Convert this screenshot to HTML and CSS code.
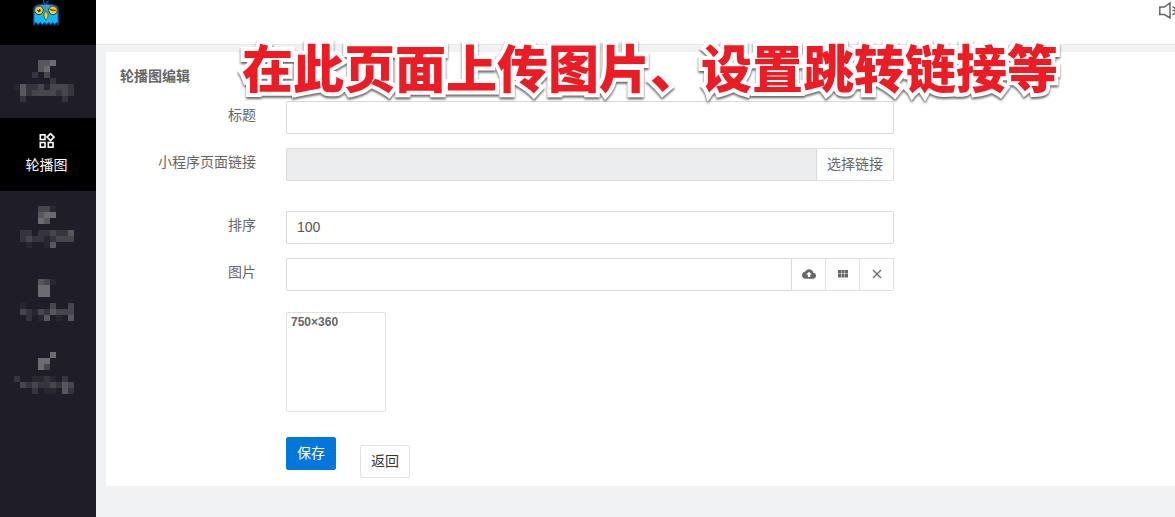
FILE: index.html
```html
<!DOCTYPE html>
<html lang="zh-CN">
<head>
    <meta charset="UTF-8">
    <meta name="viewport" content="width=device-width, initial-scale=1.0">
    <title>轮播图编辑</title>
    <link rel="stylesheet" href="styles.css">
</head>
<body>
    <div class="layout">
        <aside class="sidebar">
            <div class="logo">
                <svg width="28" height="26" viewBox="96 0 84 78">
                    <path d="M138 15c-8-4-8-10-7-17M138 15c-1-5 2-10 8-10" fill="none" stroke="#1558a8" stroke-width="4"/>
                    <path d="M101 74V30c0-12 9-18 37-18s37 6 37 18v44l-5-5-6 6-6-6-6 6-6-6-7 6-6-6-6 6-6-6-6 6-7-6-6 6z" fill="#12b9f5" stroke="#0c3c7c" stroke-width="4"/>
                    <path d="M106 20c14-8 50-8 64 0l-32 16z" fill="#3a9bd8"/>
                    <circle cx="117" cy="31" r="13" fill="#ffc808" stroke="#0c3c7c" stroke-width="3"/>
                    <circle cx="159" cy="31" r="13" fill="#ffc808" stroke="#0c3c7c" stroke-width="3"/>
                    <circle cx="117" cy="31" r="5" fill="#123a6b"/>
                    <circle cx="115" cy="28" r="2" fill="#fff"/>
                    <path d="M150 28c4-1 6 4 9 3s5-1 8 1" fill="none" stroke="#6b4a10" stroke-width="4"/>
                    <path d="M138 34c5 3 7 9 6 14-1 6-4 10-6 13-2-3-5-7-6-13-1-5 1-11 6-14z" fill="#ffc808" stroke="#0c3c7c" stroke-width="2"/>
                </svg>
            </div>
            <nav class="menu">
                <a class="menu-item" href="#" aria-label="菜单一">
                    <svg class="blocks" viewBox="0 0 10 7">
                        <path class="s1" d="M0 4.5h1M5 4.5h1"/>
                        <path class="s2" d="M3 2.5h1M6 3.5h1M2 4.5h2M9 4.5h1M2 5.5h1M7 5.5h1M9 5.5h1M1 6.5h1M8 6.5h1"/>
                        <path class="s3" d="M5 2.5h1M4 4.5h1M6 4.5h3M3 5.5h4M8 5.5h1"/>
                        <path class="s4" d="M4 .5h2M4 1.5h1M1 4.5h1M1 5.5h1"/>
                        <path class="s5" d="M6 .5h1M5 1.5h1"/>
                    </svg>
                </a>
                <a class="menu-item active" href="#">
                    <svg width="16" height="16" viewBox="0 0 16 16" fill="none" stroke="#fff" stroke-width="1.600">
                        <rect x="1.300" y="1.800" width="4.700" height="4.700"/>
                        <path d="M11.500 .6L15 4.100 11.500 7.600 8 4.100z"/>
                        <rect x="1.300" y="9.500" width="4.700" height="4.700"/>
                        <rect x="9.300" y="9.500" width="4.700" height="4.700"/>
                    </svg>
                    <span>轮播图</span>
                </a>
                <a class="menu-item" href="#" aria-label="菜单三">
                    <svg class="blocks" viewBox="0 0 10 7">
                        <path class="s1" d="M6 .5h1M5 5.5h1M2 6.5h1M5 6.5h1"/>
                        <path class="s2" d="M1 4.5h2M4 4.5h2M7 4.5h2M1 5.5h1M3 5.5h2M6 5.5h1"/>
                        <path class="s3" d="M4 .5h2M6 4.5h1M2 5.5h1M7 5.5h3"/>
                        <path class="s4" d="M4 1.5h1M5 2.5h1M9 4.5h1M6 6.5h1"/>
                        <path class="s5" d="M5 1.5h2M4 2.5h1"/>
                    </svg>
                </a>
                <a class="menu-item" href="#" aria-label="菜单四">
                    <svg class="blocks" viewBox="0 0 10 7">
                        <path class="s1" d="M6 .5h1M1 4.5h1M3 5.5h1M4 6.5h1M7 6.5h1"/>
                        <path class="s2" d="M2 5.5h1M5 5.5h1M2 6.5h1"/>
                        <path class="s3" d="M5 .5h1M6 4.5h1M9 4.5h1M1 5.5h1M4 5.5h1M7 5.5h3"/>
                        <path class="s4" d="M4 .5h1M6 5.5h1M5 6.5h1M9 6.5h1"/>
                        <path class="s5" d="M4 1.5h2M4 2.5h2"/>
                    </svg>
                </a>
                <a class="menu-item" href="#" aria-label="菜单五">
                    <svg class="blocks" viewBox="0 0 10 7">
                        <path class="s1" d="M3 4.5h2M6 4.5h1M5 6.5h2"/>
                        <path class="s2" d="M0 4.5h1M5 4.5h1M8 4.5h1M2 5.5h1M4 5.5h2M7 5.5h1M3 6.5h1M9 6.5h1"/>
                        <path class="s3" d="M5 2.5h1M1 5.5h1M3 5.5h1M6 5.5h1M9 5.5h1"/>
                        <path class="s4" d="M8 5.5h1M8 6.5h1"/>
                        <path class="s5" d="M6 .5h1M4 1.5h2M4 2.5h1"/>
                    </svg>
                </a>
            </nav>
        </aside>

        <div class="main">
            <header class="topbar">
                <svg width="16" height="20" viewBox="0 0 16 20" fill="none" stroke="#666" stroke-width="1.500">
                    <path d="M.8 7h4.500L11 3v15l-5.700-3.500H.8zM13.500 6.500l3 2M13.500 10.500h3M13.500 15l3-2.500"/>
                </svg>
            </header>

            <main class="card">
                <h1 class="card-title">轮播图编辑</h1>
                <form class="form">
                    <div class="row">
                        <label for="title">标题</label>
                        <div class="field"><input type="text" id="title"></div>
                    </div>
                    <div class="row row-link">
                        <label for="link">小程序页面链接</label>
                        <div class="field group">
                            <input type="text" id="link" disabled>
                            <button type="button" class="addon">选择链接</button>
                        </div>
                    </div>
                    <div class="row">
                        <label for="sort">排序</label>
                        <div class="field"><input type="text" id="sort" value="100"></div>
                    </div>
                    <div class="row row-image">
                        <label for="image">图片</label>
                        <div class="field">
                            <div class="group">
                                <input type="text" id="image">
                                <button type="button" class="addon icon" aria-label="上传">
                                    <svg width="14" height="14" viewBox="0 0 24 24" fill="#666"><path d="M19.350 10.040C18.670 6.590 15.640 4 12 4 9.110 4 6.600 5.640 5.350 8.040 2.340 8.360 0 10.910 0 14c0 3.310 2.690 6 6 6h13c2.760 0 5-2.240 5-5 0-2.640-2.050-4.780-4.650-4.960zM14 13v4h-4v-4H7l5-5 5 5h-3z"/></svg>
                                </button>
                                <button type="button" class="addon icon" aria-label="图库">
                                    <svg width="14" height="14" viewBox="0 0 14 14" fill="#666"><path d="M2 3h3v3.500H2zM5.500 3h3v3.500h-3zM9 3h3v3.500H9zM2 7h3v3.500H2zM5.500 7h3v3.500h-3zM9 7h3v3.500H9z"/></svg>
                                </button>
                                <button type="button" class="addon icon" aria-label="删除">
                                    <svg width="14" height="14" viewBox="0 0 14 14" fill="none" stroke="#666" stroke-width="1.200"><path d="M3 3l8 8M11 3l-8 8"/></svg>
                                </button>
                            </div>
                            <div class="preview">750×360</div>
                        </div>
                    </div>
                    <div class="actions">
                        <button type="submit" class="btn primary">保存</button>
                        <a class="btn back" href="#">返回</a>
                    </div>
                </form>
            </main>
        </div>
    </div>

    <div class="notice">在此页面上传图片、设置跳转链接等</div>
</body>
</html>
```
FILE: styles.css
```css
* {
    box-sizing: border-box;
}
body {
    margin: 0;
    overflow: hidden;
    font-family: "Liberation Sans", "Noto Sans CJK SC", sans-serif;
    font-size: 14px;
    color: #666;
    background-color: #f1f2f4;
}
a {
    text-decoration: none;
}
.layout {
    display: flex;
    min-height: 100vh;
}
.sidebar {
    width: 96px;
    flex: none;
    background-color: #1f1e28;
}
.logo {
    height: 45px;
    padding-left: 32px;
    background-color: #000;
}
.logo svg {
    display: block;
}
.menu-item {
    display: flex;
    flex-direction: column;
    align-items: center;
    height: 73px;
    padding-top: 15px;
    padding-right: 3px;
    color: #fff;
    line-height: 20px;
}
.menu-item.active {
    gap: 6px;
    background-color: #000;
}
.menu-item .blocks {
    width: 60px;
    height: 42px;
    margin-right: 5px;
}
.blocks path {
    fill: none;
    stroke-width: 1;
    shape-rendering: crispEdges;
}
.s1 { stroke: #28272f; }
.s2 { stroke: #36353d; }
.s3 { stroke: #47464c; }
.s4 { stroke: #58575d; }
.s5 { stroke: #6b6b70; }

.main {
    flex: 1;
    min-width: 0;
}
.topbar {
    display: flex;
    justify-content: flex-end;
    height: 45px;
    background-color: #fff;
    border-bottom: 1px solid #eaeaea;
}
.card {
    margin: 7px 0 0 10px;
    padding: 14px 14px 8px;
    background-color: #fff;
}
.card-title {
    margin: 0 0 15px;
    font-size: 14px;
    line-height: 20px;
}
.row {
    display: flex;
    gap: 30px;
    margin-bottom: 14px;
}
.row-link {
    margin-bottom: 30px;
}
.row-image {
    margin-bottom: 25px;
}
.row label {
    width: 136px;
    flex: none;
    text-align: right;
    line-height: 28px;
}
.field {
    flex: 1;
    max-width: 608px;
}
input {
    display: block;
    width: 100%;
    height: 33px;
    padding: 0 10px 2px;
    font: inherit;
    color: #555;
    background-color: #fff;
    border: 1px solid #d9d9d9;
    border-radius: 2px;
}
input:disabled {
    background-color: #ecedef;
}
.group {
    display: flex;
}
.group input {
    flex: 1;
    min-width: 0;
    border-radius: 2px 0 0 2px;
}
.addon {
    height: 33px;
    padding: 0 10px 3px;
    font: inherit;
    color: #666;
    background-color: #fff;
    border: 1px solid #dfe0e6;
    border-left: 0;
}
.addon.icon {
    display: flex;
    align-items: center;
    justify-content: center;
    width: 34px;
    padding: 0 0 2px;
}
.addon:last-child {
    border-radius: 0 2px 2px 0;
}
.preview {
    width: 100px;
    height: 100px;
    margin-top: 21px;
    padding: 1px 4px;
    font-size: 12px;
    font-weight: bold;
    line-height: 16px;
    border: 1px solid #e2e2e2;
    border-radius: 2px;
}
.actions {
    display: flex;
    gap: 24px;
    padding-left: 166px;
}
.btn {
    width: 50px;
    height: 33px;
    padding: 0;
    font: inherit;
    line-height: 31px;
    text-align: center;
    border: 1px solid #e2e2e2;
    border-radius: 2px;
}
.primary {
    color: #fff;
    background-color: #0078db;
    border-color: #0078db;
}
.back {
    margin-top: 8px;
    color: #333;
}

/* 页面说明浮层 */
.notice {
    position: absolute;
    top: 34px;
    left: 242px;
    font-family: "Noto Sans CJK SC", sans-serif;
    font-size: 51px;
    font-weight: 900;
    line-height: 64px;
    white-space: nowrap;
    color: #ed1c24;
    -webkit-text-stroke: 8px #fff;
    paint-order: stroke fill;
    stroke-linejoin: round;
    filter: drop-shadow(0 2px 1px #666);
    pointer-events: none;
}
```
